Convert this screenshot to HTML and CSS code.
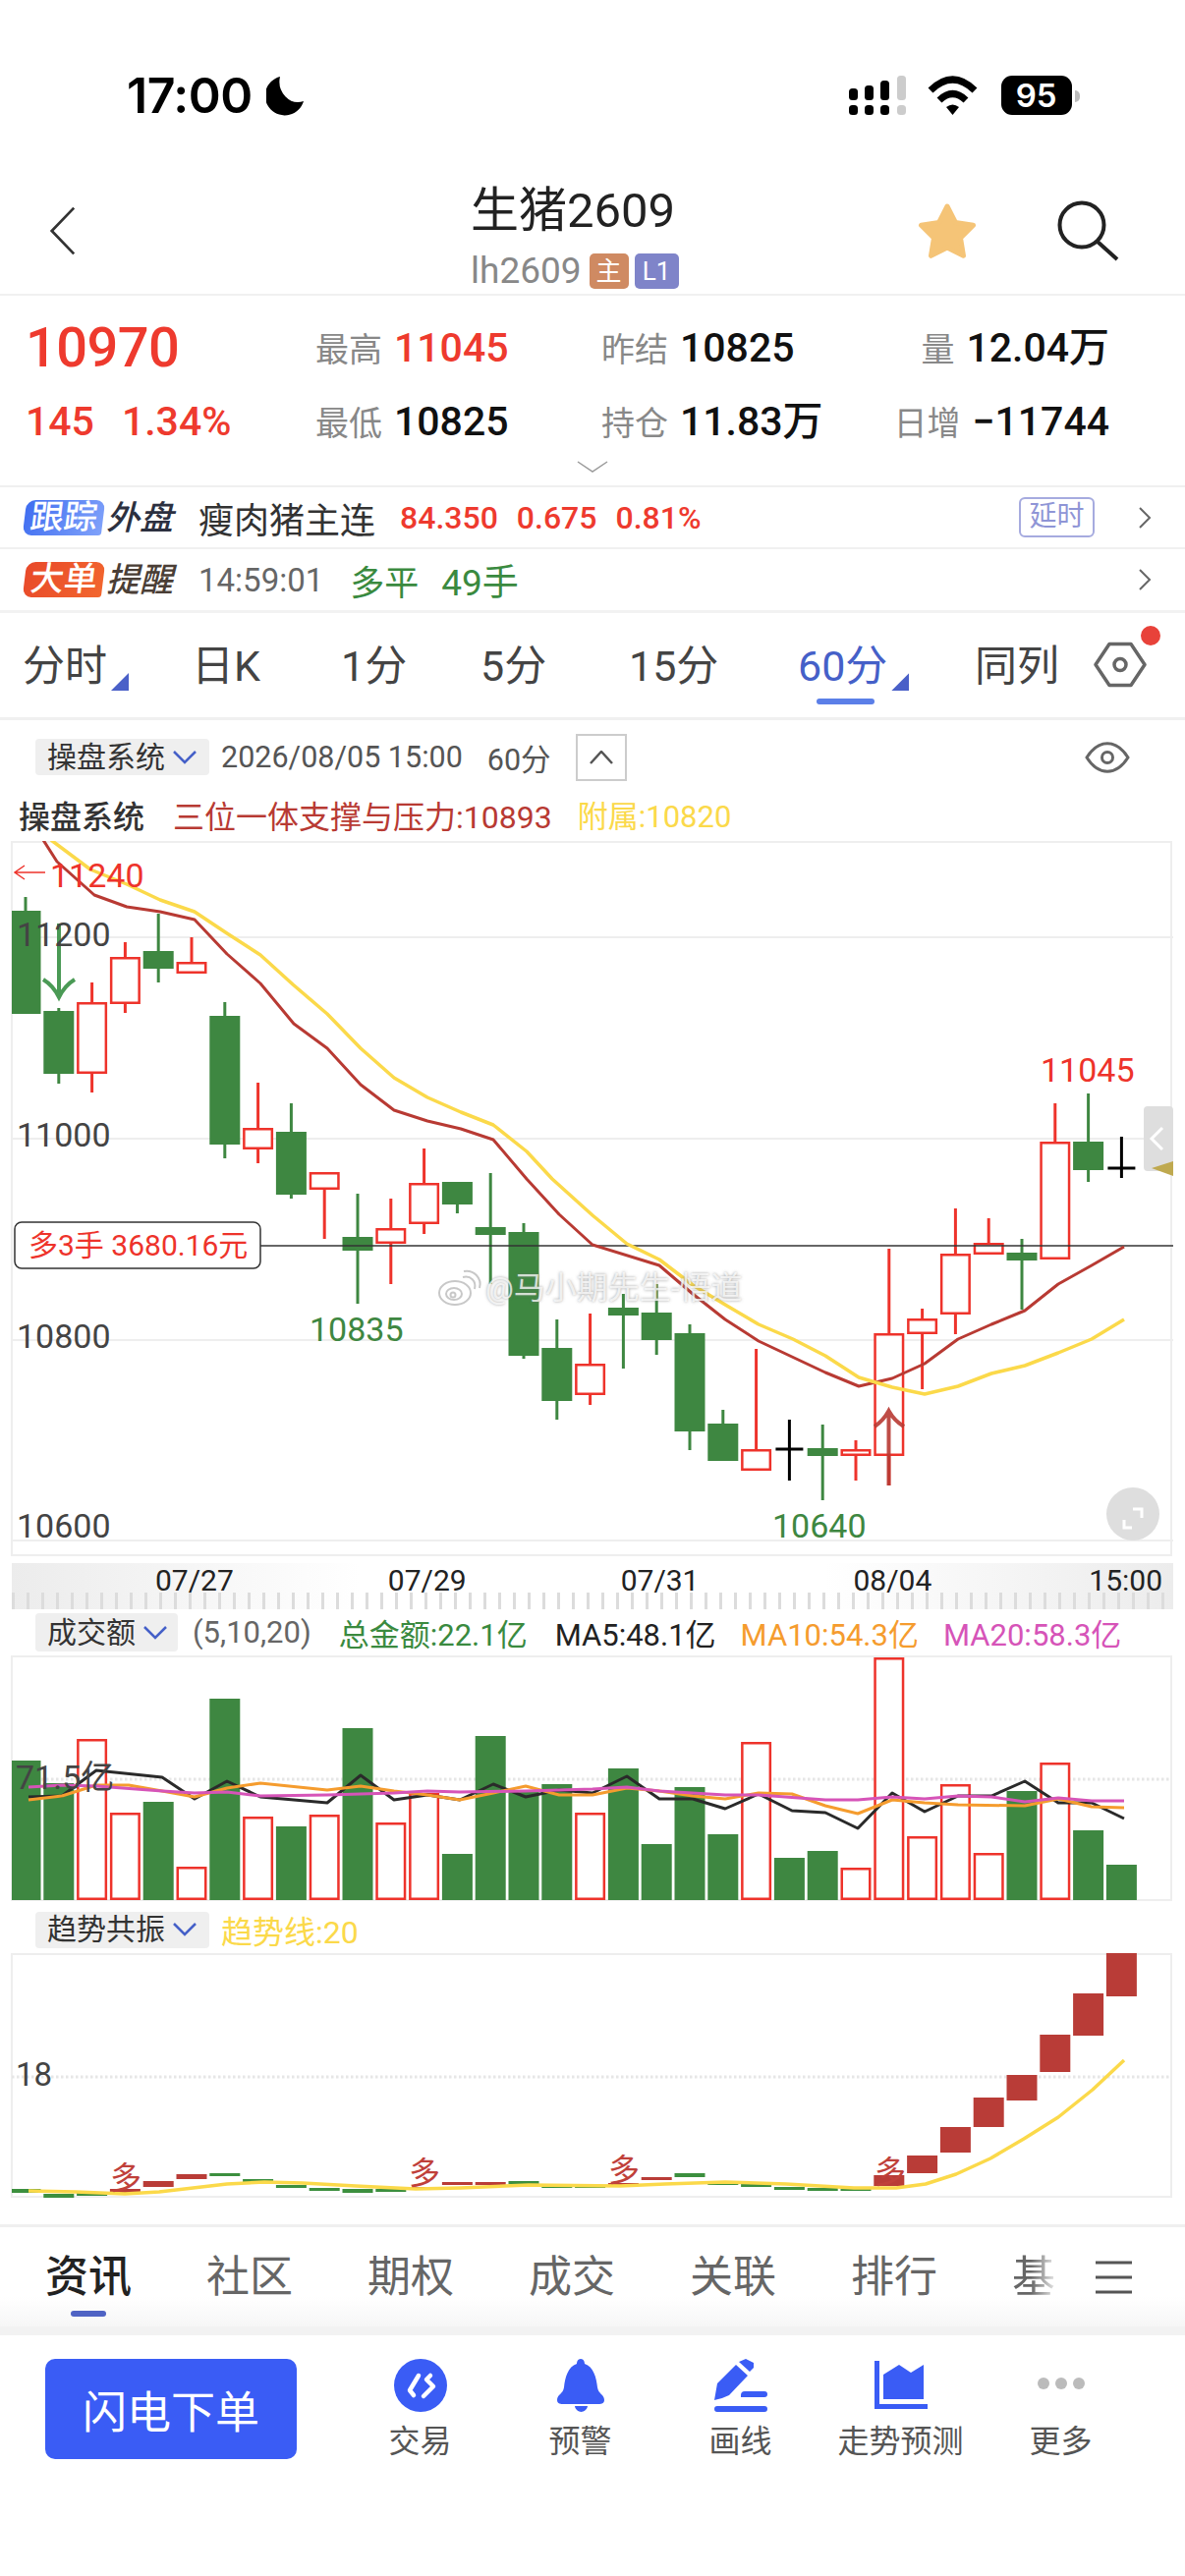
FILE: index.html
```html
<!DOCTYPE html>
<html lang="zh">
<head>
<meta charset="utf-8">
<title>生猪2609</title>
<link rel="stylesheet" href="styles.css">
</head>
<body>
<div class="status">
  <span class="time">17:00</span>
  <svg class="ic-moon" viewBox="273 77 40 41"><path d="M287 78A20 20 0 1 0 311 103A19 21 0 0 1 287 78Z"/></svg>
  <svg class="ic-signal" viewBox="865 77 60 41">
    <rect x="865" y="107" width="9" height="10" rx="3.5"/><rect x="881" y="107" width="9" height="10" rx="3.5"/><rect x="897" y="107" width="9" height="10" rx="3.5"/><rect class="off" x="914" y="107" width="9" height="10" rx="3.5"/>
    <rect x="865" y="90" width="9" height="12" rx="3.5"/><rect x="881" y="87" width="9" height="15" rx="3.5"/><rect x="897" y="82" width="9" height="20" rx="3.5"/><rect class="off" x="914" y="77" width="9" height="25" rx="3.5"/>
  </svg>
  <svg class="ic-wifi" viewBox="945 78 52 40">
    <path class="arc" d="M948 93Q970.5 71 993 93"/><path class="arc" d="M957 103Q970.5 90 984 103"/><path d="M964 110Q970.5 105 977 110L970.5 118Z"/>
  </svg>
  <span class="battery">95</span><span class="batt-nub"></span>
</div>

<header class="nav">
  <svg class="ic-back" viewBox="0 0 30 56"><path d="M28 2L3 28L28 54"/></svg>
  <div class="title">
    <div class="title-main">生猪2609</div>
    <div class="title-sub">lh2609<span class="badge badge-zhu">主</span><span class="badge badge-l1">L1</span></div>
  </div>
  <svg class="ic-star" viewBox="933 204 62 62"><path d="M964 210L972.4 226.5L990.5 229.3L977.5 242.2L980.5 260.3L964 252L947.5 260.3L950.5 242.2L937.5 229.3L955.6 226.5Z"/></svg>
  <svg class="ic-search" viewBox="1074 202 66 66"><circle cx="1101" cy="229" r="22.5"/><path d="M1117 246L1137 264"/></svg>
</header>

<section class="quote">
  <div class="q-row">
    <span class="q-big up">10970</span>
    <span class="q-cell"><i class="q-l">最高</i><b class="q-v up">11045</b></span>
    <span class="q-cell"><i class="q-l">昨结</i><b class="q-v">10825</b></span>
    <span class="q-cell q-end"><i class="q-l">量</i><b class="q-v">12.04万</b></span>
  </div>
  <div class="q-row">
    <span class="q-delta up"><b class="q-v">145</b><b class="q-v">1.34%</b></span>
    <span class="q-cell"><i class="q-l">最低</i><b class="q-v">10825</b></span>
    <span class="q-cell"><i class="q-l">持仓</i><b class="q-v">11.83万</b></span>
    <span class="q-cell q-end"><i class="q-l">日增</i><b class="q-v">−11744</b></span>
  </div>
  <svg class="ic-down" viewBox="0 0 32 12"><path d="M1 1L16 11L31 1"/></svg>
</section>

<div class="w-row">
  <span class="tag tag-blue">跟踪</span><span class="tag-txt">外盘</span>
  <span class="w-name">瘦肉猪主连</span>
  <span class="w-num up">84.350</span><span class="w-num up">0.675</span><span class="w-num up">0.81%</span>
  <span class="delay">延时</span>
  <svg class="ic-chev" viewBox="0 0 14 22"><path d="M2 1L12 11L2 21"/></svg>
</div>
<div class="w-row w-row2">
  <span class="tag tag-orange">大单</span><span class="tag-txt tag-brown">提醒</span>
  <span class="w-time">14:59:01</span>
  <span class="w-green">多平</span><span class="w-green w-hand">49手</span>
  <svg class="ic-chev ic-push" viewBox="0 0 14 22"><path d="M2 1L12 11L2 21"/></svg>
</div>

<nav class="tabs">
  <span class="tab has-tri">分时</span>
  <span class="tab">日K</span>
  <span class="tab">1分</span>
  <span class="tab">5分</span>
  <span class="tab">15分</span>
  <span class="tab tab-on has-tri">60分</span>
  <span class="tab">同列</span>
  <span class="hex-wrap">
    <svg class="ic-hex" viewBox="1113 652 54 49"><path d="M1115 676.5L1129 655.5H1151L1165 676.5L1151 697.5H1129Z"/><circle cx="1140" cy="676.5" r="6"/></svg>
    <span class="dot"></span>
  </span>
</nav>

<div class="info">
  <span class="drop drop-wide">操盘系统<svg class="ic-drop" viewBox="0 0 26 14"><path d="M2 1L13 12L24 1"/></svg></span>
  <span class="info-date">2026/08/05 15:00</span>
  <span class="info-date">60分</span>
  <span class="up-btn"><svg viewBox="0 0 24 14"><path d="M1 13L12 1L23 13"/></svg></span>
  <svg class="ic-eye" viewBox="1106 755 46 32"><path d="M1108 771C1120 752 1138 752 1150 771C1138 790 1120 790 1108 771Z"/><circle cx="1129" cy="771" r="5.5"/></svg>
</div>
<div class="legend">
  <span class="lg-name">操盘系统</span>
  <span class="lg-red">三位一体支撑与压力:10893</span>
  <span class="lg-yel">附属:10820</span>
</div>

<div class="chart-wrap">
  <svg class="pane pane-main" viewBox="0 856 1206 728">
    <path class="grid" d="M12 954H1194M12 1159H1194M12 1364H1194M12 1568H1194"/>
    <rect class="frame" x="12" y="857" width="1180" height="726"/>
    <g id="candles"></g>
    <path class="trend-line" d="M15 1268H1194"/>
    <polyline id="ma-red" class="ln ln-red"></polyline>
    <polyline id="ma-yel" class="ln ln-yel"></polyline>
    <path class="arr-green" d="M60 940V1012M44 997Q54 1003 60 1015Q66 1003 76 997"/>
    <path class="arr-red" d="M904.5 1512V1436M890 1452Q899 1446 904.5 1436Q910 1446 920 1452"/>
    <path class="arr-thin" d="M46 888H15M25 881L15 888L25 895"/>
    <text class="ax" x="17" y="963">11200</text>
    <text class="ax" x="17" y="1167">11000</text>
    <text class="ax" x="17" y="1372">10800</text>
    <text class="ax" x="17" y="1565">10600</text>
    <text class="ax ax-up" x="51" y="903">11240</text>
    <text class="ax ax-up" x="1059" y="1101">11045</text>
    <text class="ax ax-dn" x="315" y="1365">10835</text>
    <text class="ax ax-dn" x="786" y="1565">10640</text>
    <rect class="pos-box" x="15" y="1244" width="250" height="47" rx="7"/>
    <text class="pos-txt" x="29" y="1278">多3手 3680.16元</text>
    <rect class="handle" x="1164" y="1126" width="30" height="66" rx="4"/>
    <path class="handle-chev" d="M1183 1148L1172 1159L1183 1170"/>
    <path class="gold" d="M1172 1189L1194 1182V1197Z"/>
    <circle class="expand" cx="1153" cy="1541" r="27"/>
    <path class="expand-ic" d="M1144 1547V1555H1152M1153 1536H1162V1545"/>
  </svg>
  <div class="watermark">
    <svg class="ic-weibo" viewBox="0 0 44 36"><ellipse cx="18" cy="23" rx="16" ry="12"/><ellipse cx="17" cy="24" rx="8" ry="6"/><circle cx="16" cy="25" r="2.5"/><path d="M26 7C34 5 40 11 38 19M27 1C37 -1 46 8 43 18"/></svg>
    <span>@马小期先生-悟道</span>
  </div>
</div>

<div class="strip">
  <span>07/27</span><span>07/29</span><span>07/31</span><span>08/04</span><span class="strip-end">15:00</span>
</div>

<div class="sub-head">
  <span class="drop">成交额<svg class="ic-drop" viewBox="0 0 26 14"><path d="M2 1L13 12L24 1"/></svg></span>
  <span class="sh-args">(5,10,20)</span>
  <span class="sh-green">总金额:22.1亿</span>
  <span class="sh-dark">MA5:48.1亿</span>
  <span class="sh-orange">MA10:54.3亿</span>
  <span class="sh-pink">MA20:58.3亿</span>
</div>
<svg class="pane pane-vol" viewBox="0 1685 1206 251">
  <rect class="frame" x="12" y="1686" width="1180" height="248"/>
  <path class="dots" d="M12 1811H1192"/>
  <g id="bars"></g>
  <polyline id="v-blk" class="ln ln-blk"></polyline>
  <polyline id="v-org" class="ln ln-org"></polyline>
  <polyline id="v-pnk" class="ln ln-pnk"></polyline>
  <text class="ax ax-vol" x="16" y="1821">71.5亿</text>
</svg>

<div class="sub-head sub-head-2">
  <span class="drop drop-wide">趋势共振<svg class="ic-drop" viewBox="0 0 26 14"><path d="M2 1L13 12L24 1"/></svg></span>
  <span class="sh-yel">趋势线:20</span>
</div>
<svg class="pane pane-trend" viewBox="0 1988 1206 250">
  <rect class="frame" x="12" y="1989" width="1180" height="247"/>
  <path class="dots" d="M12 2114H1192"/>
  <g id="blocks"></g>
  <polyline id="t-yel" class="ln ln-yel"></polyline>
  <text class="ax ax-18" x="16" y="2123">18</text>
  <text class="duo" x="112" y="2228">多</text>
  <text class="duo" x="416" y="2223">多</text>
  <text class="duo" x="619" y="2220">多</text>
  <text class="duo" x="890" y="2222">多</text>
</svg>

<nav class="btabs">
  <span class="btab btab-on">资讯</span>
  <span class="btab">社区</span>
  <span class="btab">期权</span>
  <span class="btab">成交</span>
  <span class="btab">关联</span>
  <span class="btab">排行</span>
  <span class="btab btab-fade">基</span>
  <svg class="ic-menu" viewBox="0 0 37 34"><path d="M0 2H37M0 17H37M0 32H37"/></svg>
</nav>
<div class="band"></div>

<footer class="toolbar">
  <button class="flash">闪电下单</button>
  <div class="tool">
    <svg viewBox="401 2401 54 54"><circle class="blue" cx="428" cy="2428" r="27"/><path class="ic-w" d="M426 2418L417 2433L421 2438M438 2418L434 2422L441 2429L431 2439"/></svg>
    <span>交易</span>
  </div>
  <div class="tool">
    <svg viewBox="564 2401 54 54"><path class="blue" d="M591 2401C594 2401 595 2404 595 2406C604 2409 607 2420 608 2430C609 2437 615 2437 615 2443C615 2447 611 2447 608 2447H574C571 2447 567 2447 567 2443C567 2437 573 2437 574 2430C575 2420 578 2409 587 2406C587 2404 588 2401 591 2401ZM585 2449H598C598 2452 594 2455 591.500 2455C589 2455 585 2452 585 2449Z"/></svg>
    <span>预警</span>
  </div>
  <div class="tool">
    <svg viewBox="727 2401 54 54"><path class="blue" d="M727 2443L730 2426L749 2407L761 2418L742 2438Q734 2442 727 2443ZM752 2404L759 2401L767 2405L767 2410L763 2414ZM754 2438Q754 2434 758 2434H778Q781 2434 781 2437Q781 2440 778 2440H754ZM727 2452Q727 2449 730 2449H778Q781 2449 781 2452Q781 2455 778 2455H730Q727 2455 727 2452Z"/></svg>
    <span>画线</span>
  </div>
  <div class="tool">
    <svg viewBox="890 2401 54 54"><path class="blue" d="M890 2403H895V2447H944V2452H890ZM899 2417L915 2407L927 2415L940 2407V2442H899Z"/></svg>
    <span>走势预测</span>
  </div>
  <div class="tool">
    <svg viewBox="1052 2401 54 54"><g class="ic-more"><circle cx="1061" cy="2426" r="6"/><circle cx="1079" cy="2426" r="6"/><circle cx="1097" cy="2426" r="6"/></g></svg>
    <span>更多</span>
  </div>
</footer>
<script src="chart.js"></script>
</body>
</html>
```
FILE: styles.css
```css
* { box-sizing: border-box; }
html, body { margin: 0; padding: 0; }
body {
  width: 1206px;
  height: 2622px;
  overflow: hidden;
  background: #fff;
  color: #222;
  font-family: Roboto, "Noto Sans CJK SC", sans-serif;
}
svg { display: block; }
i { font-style: normal; }
.up { color: #ee3a2e; }

/* status bar */
.status { height: 170px; padding: 77px 0 0 129px; display: flex; align-items: flex-start; }
.time { font-family: Inter, sans-serif; font-weight: 600; font-size: 50px; line-height: 40px; color: #000; letter-spacing: -0.5px; }
.ic-moon { width: 40px; height: 41px; margin-left: 14px; fill: #000; }
.ic-signal { width: 60px; height: 41px; margin-left: 553px; fill: #000; }
.ic-signal .off { fill: #ccc; }
.ic-wifi { width: 52px; height: 40px; margin-left: 20px; fill: #000; }
.ic-wifi .arc { fill: none; stroke: #000; stroke-width: 7px; }
.battery {
  width: 72px; height: 40px; margin-left: 23px; border-radius: 11px; background: #000; color: #fff;
  font-family: Inter, sans-serif; font-weight: 600; font-size: 33px; line-height: 40px; text-align: center;
}
.batt-nub { width: 5px; height: 12px; margin: 15px 0 0 3px; border-radius: 0 5px 5px 0; background: #bbb; }

/* nav */
.nav { height: 131px; padding: 0 66px 0 50px; border-bottom: 2px solid #f0f0f0; display: flex; align-items: flex-start; }
.ic-back { width: 27px; height: 54px; margin-top: 38px; fill: none; stroke: #333; stroke-width: 3px; }
.title { margin: 20px 0 0 402px; flex: 1; }
.title-main { font-size: 49px; line-height: 50px; color: #222; }
.title-sub { display: flex; align-items: center; font-size: 37px; line-height: 38px; color: #888; margin-top: 17px; }
.badge { height: 36px; border-radius: 5px; color: #fff; font-size: 26px; line-height: 36px; text-align: center; }
.badge-zhu { width: 40px; margin-left: 8px; background: #cf8a62; }
.badge-l1 { width: 45px; margin-left: 6px; background: #7f84c9; }
.ic-star { width: 62px; height: 62px; margin-top: 34px; fill: #f5c477; stroke: #f5c477; stroke-width: 5px; stroke-linejoin: round; }
.ic-search { width: 66px; height: 66px; margin: 32px 0 0 79px; fill: none; stroke: #222; stroke-width: 4px; }

/* quote */
.quote { height: 195px; padding: 15px 77px 0 26px; border-bottom: 2px solid #f0f0f0; }
.q-row { height: 75px; display: grid; grid-template-columns: 295px 291px 1fr auto; align-items: center; line-height: 50px; }
.q-cell { padding-top: 9px; }
.q-big { font-size: 56px; font-weight: 500; letter-spacing: -0.6px; }
.q-l { font-size: 34px; color: #888; margin-right: 12px; }
.q-v { font-size: 41px; font-weight: 500; color: #111; }
.q-v.up, .up .q-v { color: #ee3a2e; }
.q-delta { display: flex; gap: 28px; }
.q-end { justify-self: end; }
.ic-down { width: 32px; height: 12px; margin: 3px 0 0 561px; fill: none; stroke: #999; stroke-width: 1.500px; }

/* watch rows */
.w-row { height: 63px; padding: 0 34px 0 25px; border-bottom: 2px solid #f0f0f0; display: flex; align-items: center; }
.w-row2 { border-bottom: 3px solid #f2f2f2; height: 65px; }
.tag {
  width: 80px; height: 36px; border-radius: 9px 9px 3px 9px; color: #fff; font-size: 34px; line-height: 35px;
  text-align: center; transform: skewX(-7deg); font-weight: 500; flex: none; white-space: nowrap;
}
.tag-blue { background: linear-gradient(110deg, #3f6df0, #80a2fa); }
.tag-orange { background: linear-gradient(110deg, #e8492a, #f2662e); }
.tag-txt { margin-left: 3px; width: 69px; font-size: 34px; font-style: italic; font-weight: 500; color: #2c3040; line-height: 36px; white-space: nowrap; }
.tag-brown { color: #4a3e36; }
.w-name { margin-left: 25px; font-size: 36px; color: #333; }
.w-num { margin-left: 19px; font-size: 32px; font-weight: 500; }
.w-name + .w-num { margin-left: 25px; }
.delay {
  margin-left: auto; width: 77px; height: 41px; border: 2px solid #a6abdf; border-radius: 6px;
  font-size: 28px; line-height: 36px; color: #8f95d6; text-align: center;
}
.ic-chev { width: 14px; height: 22px; margin-left: 44px; fill: none; stroke: #666; stroke-width: 2px; flex: none; }
.ic-push { margin-left: auto; }
.w-time { margin-left: 25px; font-size: 33px; color: #666; }
.w-green { margin-left: 27px; font-size: 35px; color: #3a8a3f; }
.w-hand { margin-left: 23px; font-size: 37px; }

/* chart tabs */
.tabs {
  height: 109px; padding-left: 23px; border-bottom: 3px solid #f0f0f0; display: grid;
  grid-template-columns: 172px 152px 142px 151px 172px 180px 123px auto; align-items: start; justify-items: start;
}
.tab { position: relative; margin-top: 28px; font-size: 43px; line-height: 52px; color: #444; white-space: nowrap; }
.tab-on { color: #4560c8; }
.tab-on::before { content: ""; position: absolute; left: 19px; bottom: -13px; width: 59px; height: 6px; border-radius: 3px; background: #5b7fe8; }
.has-tri::after {
  content: ""; position: absolute; right: -22px; bottom: 1px; width: 18px; height: 18px;
  background: #4a60c8; clip-path: polygon(100% 0, 100% 100%, 0 100%);
}
.hex-wrap { position: relative; margin: 28px 0 0 -2px; }
.ic-hex { width: 54px; height: 49px; fill: none; stroke: #666; stroke-width: 3.500px; stroke-linejoin: round; }
.dot { position: absolute; left: 48px; top: -15px; width: 20px; height: 20px; border-radius: 50%; background: #e8423a; }

/* info */
.info { height: 75px; padding-left: 36px; display: flex; align-items: center; }
.drop {
  height: 39px; padding: 0 10px 0 12px; border-radius: 4px; background: #efefef; font-size: 30px; line-height: 38px;
  color: #333; display: flex; align-items: center; gap: 7px; white-space: nowrap; flex: none;
}
.drop-wide { width: 177px; height: 37px; }
.ic-drop { width: 26px; height: 14px; fill: none; stroke: #4560c8; stroke-width: 2.500px; }
.info-date { margin-left: 12px; font-size: 30.500px; color: #555; white-space: nowrap; }
.info-date + .info-date { margin-left: 25px; }
.up-btn { width: 52px; height: 48px; margin-left: 25px; border: 2px solid #ccc; display: flex; align-items: center; justify-content: center; }
.up-btn svg { width: 24px; height: 14px; fill: none; stroke: #555; stroke-width: 2.500px; }
.ic-eye { width: 46px; height: 32px; margin-left: 466px; fill: none; stroke: #666; stroke-width: 3px; }
.legend { height: 48px; padding-left: 19px; display: flex; align-items: center; font-size: 32px; line-height: 48px; white-space: nowrap; }
.lg-name { color: #333; font-weight: 500; }
.lg-red { margin-left: 29px; color: #b83a33; }
.lg-yel { margin-left: 26px; color: #fbd94a; font-size: 31px; }

/* panes */
.chart-wrap { position: relative; }
.pane { width: 1206px; overflow: hidden; }
.pane-main { height: 728px; }
.pane-vol { height: 251px; margin-top: 4px; }
.pane-trend { height: 250px; margin-top: 5px; }
.grid { fill: none; stroke: #eeeeee; stroke-width: 2px; }
.frame { fill: none; stroke: #eeeeee; stroke-width: 2px; }
.trend-line { fill: none; stroke: #333; stroke-width: 1.500px; }
.dots { fill: none; stroke: #e6e6e6; stroke-width: 3px; stroke-dasharray: 2.500 2.500; }
.c-g { fill: #3e8741; }
.c-r { fill: #fff; stroke: #ee332b; stroke-width: 2.500px; }
.w-g { stroke: #3e8741; stroke-width: 3px; }
.w-r { stroke: #ee332b; stroke-width: 3px; }
.w-k { stroke: #000; stroke-width: 3px; }
.b-r { fill: #b93c37; }
.b-g { fill: #3c8f3e; }
.ln { fill: none; stroke-width: 3px; stroke-linejoin: round; }
.ln-red { stroke: #b83a33; }
.ln-yel { stroke: #fbd94a; stroke-width: 3.500px; }
.ln-blk { stroke: #2a2a2a; }
.ln-org { stroke: #f59c2e; }
.ln-pnk { stroke: #d654b8; }
.arr-green { fill: none; stroke: #4a9a55; stroke-width: 4px; }
.arr-red { fill: none; stroke: #b83a33; stroke-width: 4px; opacity: 0.9; }
.arr-thin { fill: none; stroke: #ee332b; stroke-width: 1.500px; }
.ax { font-family: Roboto, sans-serif; font-size: 34px; fill: #444; }
.ax-up { fill: #ee332b; }
.ax-dn { fill: #3e8741; }
.ax-vol { font-family: Roboto, "Noto Sans CJK SC", sans-serif; }
.ax-18 { font-size: 33px; }
.pos-box { fill: #fff; stroke: #333; stroke-width: 1.500px; }
.pos-txt { font-size: 30px; fill: #ee332b; font-family: Roboto, "Noto Sans CJK SC", sans-serif; }
.handle { fill: #dedede; }
.handle-chev { fill: none; stroke: #fff; stroke-width: 3px; }
.gold { fill: #bfa94f; }
.expand { fill: #dedede; }
.expand-ic { fill: none; stroke: #fff; stroke-width: 3px; }
.duo { font-family: "Noto Sans CJK SC", sans-serif; font-size: 32px; fill: #c0403a; }

.watermark {
  position: absolute; left: 445px; top: 437px; display: flex; align-items: center; gap: 5px;
  font-size: 32px; line-height: 36px; color: rgba(255, 255, 255, 0.75);
  text-shadow: 0 0 3px rgba(120, 120, 120, 0.7); white-space: nowrap;
}
.ic-weibo { width: 44px; height: 36px; fill: rgba(255, 255, 255, 0.75); stroke: #c8c8c8; stroke-width: 2px; overflow: visible; }
.ic-weibo path { fill: none; }

/* axis strip */
.strip {
  height: 47px; margin: 7px 12px 0; padding-left: 146px; display: flex; gap: 157px;
  font-size: 30px; line-height: 36px; color: #222; white-space: nowrap;
  background:
    repeating-linear-gradient(90deg, #dcdcdc 0 3px, transparent 3px 15px) left bottom / 100% 17px no-repeat,
    linear-gradient(90deg, #ececec, #fff 30%, #fff 70%, #ececec);
}
.strip-end { margin-left: auto; margin-right: 11px; }

/* sub heads */
.sub-head { height: 39px; margin-top: 4px; padding-left: 36px; display: flex; align-items: center; font-size: 31px; white-space: nowrap; }
.sub-head-2 { height: 38px; margin-top: 9px; }
.sh-args { margin-left: 15px; color: #666; }
.sh-green { margin-left: 28px; color: #3a8a3f; }
.sh-dark { margin-left: 28px; color: #222; }
.sh-orange { margin-left: 25px; color: #f59c2e; }
.sh-pink { margin-left: 25px; color: #d654b8; }
.sh-yel { margin-left: 12px; color: #fbd94a; font-size: 32px; }

/* bottom tabs */
.btabs {
  height: 104px; margin-top: 26px; padding: 0 54px 0 46px; border-top: 3px solid #efefef;
  display: flex; align-items: center; gap: 78px;
  background: linear-gradient(#fff 70%, #f6f6f6);
}
.btab { position: relative; width: 86px; font-size: 44px; line-height: 52px; color: #666; white-space: nowrap; flex: none; }
.btab-on { color: #222; font-weight: 500; }
.btab-on::after { content: ""; position: absolute; left: 26px; bottom: -14px; width: 36px; height: 6px; border-radius: 3px; background: #4f63c4; }
.btab-fade { width: 54px; -webkit-mask-image: linear-gradient(90deg, #000 35%, transparent 90%); mask-image: linear-gradient(90deg, #000 35%, transparent 90%); }
.ic-menu { width: 37px; height: 34px; margin-left: -47px; fill: none; stroke: #555; stroke-width: 3px; flex: none; }
.band { height: 9px; background: #f2f2f2; }

/* toolbar */
.toolbar { padding: 24px 0 0 46px; display: flex; align-items: flex-start; }
.flash {
  width: 256px; height: 102px; margin-right: 44px; padding: 0; border: 0; border-radius: 10px; background: #3a5cf5; color: #fff;
  font-family: "Noto Sans CJK SC", sans-serif; font-size: 45px;
}
.tool { width: 163px; display: flex; flex-direction: column; align-items: center; color: #555; font-size: 32px; line-height: 40px; white-space: nowrap; }
.tool svg { width: 54px; height: 54px; margin-bottom: 10px; }
.blue { fill: #3a5cf5; }
.ic-w { fill: none; stroke: #fff; stroke-width: 4.500px; stroke-linecap: round; stroke-linejoin: round; }
.ic-more { fill: #bbb; }
```
FILE: chart.js
```js
var NS = 'http://www.w3.org/2000/svg';
var X = function (i) { return 26 + 33.8 * i; };

function el(parent, tag, attrs) {
  var n = document.createElementNS(NS, tag);
  for (var k in attrs) n.setAttribute(k, attrs[k]);
  parent.appendChild(n);
  return n;
}
function body(g, x, top, bot, type, w) {
  var half = w / 2;
  if (type === 'g') el(g, 'rect', { 'class': 'c-g', x: Math.max(x - half, 12), y: top, width: x - half < 12 ? x + half - 12 : w, height: bot - top });
  if (type === 'r') el(g, 'rect', { 'class': 'c-r', x: x - half + 1.25, y: top + 1.25, width: w - 2.5, height: bot - top - 2.5 });
}
function wick(g, x, a, b, type) {
  el(g, 'line', { 'class': 'w-' + type, x1: x, x2: x, y1: a, y2: b });
}

// [type, wickTop, bodyTop, bodyBottom, wickBottom]
var candles = [
  ['g',913,927,1032,1032],['g',1026,1029,1093,1103],['r',1000,1020,1093,1112],['r',959,974,1022,1031],
  ['g',930,968,986,1000],['r',954,979,991,991],['g',1020,1034,1165,1179],['r',1102,1148,1170,1184],
  ['g',1123,1152,1216,1220],['r',1193,1193,1211,1261],['g',1215,1259,1273,1327],['r',1220,1250,1266,1307],
  ['r',1169,1204,1246,1256],['g',1203,1203,1226,1235],['g',1194,1249,1257,1307],['g',1245,1254,1380,1383],
  ['g',1343,1372,1426,1445],['r',1337,1388,1420,1430],['g',1317,1331,1339,1393],['g',1307,1336,1364,1379],
  ['g',1348,1357,1457,1476],['g',1435,1449,1487,1487],['r',1373,1475,1497,1497],['k',1445,1475,1475,1507],
  ['g',1450,1474,1482,1527],['r',1466,1475,1482,1507],['r',1271,1357,1482,1512],['r',1332,1342,1358,1414],
  ['r',1230,1276,1338,1358],['r',1240,1265,1277,1277],['g',1261,1275,1283,1333],['r',1123,1162,1282,1282],
  ['g',1113,1162,1191,1203],['k',1157,1189,1189,1199]
];
var cg = document.getElementById('candles');
candles.forEach(function (c, i) {
  var x = X(i);
  wick(cg, x, c[1], c[2], c[0]);
  wick(cg, x, c[3], c[4], c[0]);
  if (c[0] === 'k') el(cg, 'line', { 'class': 'w-k', x1: x - 14, x2: x + 14, y1: c[2], y2: c[2] });
  else body(cg, x, c[2], c[3], c[0], 31);
});

var volumes = 'g1792 g1815 r1770 r1845 g1834 r1900 g1729 r1849 g1859 r1847 g1759 r1855 r1825 g1887 g1767 g1823 g1816 r1845 g1800 g1877 g1819 g1867 r1773 g1891 g1884 r1901 r1687 r1869 r1816 r1886 g1823 r1794 g1863 g1898'.split(' ');
var bg = document.getElementById('bars');
volumes.forEach(function (v, i) {
  body(bg, X(i), +v.slice(1), 1934, v[0], 31);
});

var blocks = [
  ['g',2228,2232],['g',2233,2237],['g',2232,2235],['r',2228,2232],['r',2220,2226],['r',2213,2218],['g',2212,2215],
  ['g',2218,2221],['g',2224,2227],['g',2227,2230],['g',2228,2232],['g',2228,2231],['r',2226,2227],['r',2221,2224],
  ['r',2221,2224],['g',2220,2223],['g',2225,2227],['g',2224,2227],['r',2222,2224],['r',2216,2219],['g',2212,2216],
  ['g',2222,2224],['g',2223,2226],['g',2226,2229],['g',2227,2230],['g',2228,2230],['r',2214,2225],['r',2194,2212],
  ['r',2165,2191],['r',2135,2165],['r',2112,2138],['r',2071,2109],['r',2029,2072],['r',1988,2032]
];
var bk = document.getElementById('blocks');
blocks.forEach(function (b, i) {
  var x = Math.max(X(i) - 15.5, 12);
  el(bk, 'rect', { 'class': 'b-' + b[0], x: x, y: b[1], width: X(i) + 15.5 - x, height: b[2] - b[1] });
});

function line(id, pts) { document.getElementById(id).setAttribute('points', pts); }
line('ma-red', '44,855 58,877 96,911 129,923 163,928 198,936 231,971 265,1001 299,1042 333,1067 367,1104 401,1130 435,1141 469,1149 502,1160 536,1200 569,1236 603,1267 671,1288 705,1317 738,1343 772,1365 840,1397 874,1411 908,1403 941,1388 975,1363 1009,1348 1043,1334 1077,1307 1111,1288 1144,1269');
line('ma-yel', '52,855 92,885 129,900 163,916 198,928 231,950 265,972 298,1002 333,1032 367,1067 401,1097 435,1117 469,1132 502,1145 536,1172 562,1200 603,1237 638,1266 671,1282 705,1308 738,1328 772,1348 807,1363 840,1380 874,1402 908,1412 941,1419 975,1411 1009,1398 1043,1390 1077,1377 1111,1363 1144,1343');
line('v-blk', '29,1829 63,1828 98,1802 165,1809 198,1831 231,1813 265,1829 299,1832 333,1835 367,1807 401,1832 435,1827 468,1832 502,1816 535,1829 569,1822 603,1825 638,1808 671,1831 705,1831 738,1841 772,1826 806,1843 840,1845 873,1861 908,1825 941,1844 975,1828 1009,1828 1043,1813 1077,1835 1111,1835 1144,1851');
line('v-org', '29,1832 63,1828 98,1817 131,1817 165,1823 198,1829 231,1820 265,1815 333,1822 367,1818 401,1823 435,1827 468,1832 502,1825 535,1818 569,1827 603,1827 638,1820 671,1823 705,1828 738,1831 772,1825 806,1826 840,1838 873,1846 908,1832 941,1835 975,1837 1043,1838 1077,1831 1111,1839 1144,1840');
line('v-pnk', '29,1819 63,1817 98,1818 165,1823 198,1825 231,1824 265,1828 333,1827 401,1825 435,1823 468,1824 535,1823 603,1821 638,1819 671,1823 738,1827 772,1827 840,1832 873,1832 908,1829 941,1831 975,1828 1009,1829 1043,1834 1077,1830 1111,1833 1144,1833');
line('t-yel', '29,2230 77,2231 127,2233 162,2231 231,2223 269,2221 308,2222 362,2225 423,2228 469,2227 538,2224 631,2225 677,2223 738,2221 800,2223 869,2227 912,2227 942,2223 973,2213 1008,2197 1042,2177 1077,2155 1112,2127 1144,2097');
```
